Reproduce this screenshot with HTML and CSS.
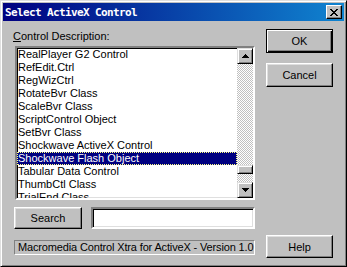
FILE: index.html
```html
<!DOCTYPE html>
<html lang="en">
<head>
  <meta charset="UTF-8" />
  <title>Select ActiveX Control</title>
  <link rel="stylesheet" href="styles.css">
</head>
<body>

  <div class="dialog">
    <div class="titlebar">
      <span class="title">Select ActiveX Control</span>
      <span class="close-btn">
        <svg width="8" height="7" viewBox="0 0 8 7"><path d="M0 0h2v1h1v1h2V1h1V0h2v1H7v1H6v1H5v1h1v1h1v1h1v1H6V6H5V5H3v1H2v1H0V6h1V5h1V4h1V3H2V2H1V1H0z" fill="#000"/></svg>
      </span>
    </div>

    <div class="body">
      <div class="left-col">
        <div class="label"><u>C</u>ontrol Description:</div>

        <div class="listbox">
          <ul class="items">
            <li>RealPlayer G2 Control</li>
            <li>RefEdit.Ctrl</li>
            <li>RegWizCtrl</li>
            <li>RotateBvr Class</li>
            <li>ScaleBvr Class</li>
            <li>ScriptControl Object</li>
            <li>SetBvr Class</li>
            <li>Shockwave ActiveX Control</li>
            <li class="selected">Shockwave Flash Object</li>
            <li>Tabular Data Control</li>
            <li>ThumbCtl Class</li>
            <li class="partial">TrialEnd Class</li>
          </ul>
          <div class="scrollbar">
            <div class="arrow-btn">
              <svg width="7" height="4" viewBox="0 0 7 4"><path d="M3 0h1v1h1v1h1v1h1v1H0V3h1V2h1V1h1z" fill="#000"/></svg>
            </div>
            <div class="track">
              <div class="thumb"></div>
            </div>
            <div class="arrow-btn">
              <svg width="7" height="4" viewBox="0 0 7 4"><path d="M0 0h7v1H6v1H5v1H4v1H3V3H2V2H1V1H0z" fill="#000"/></svg>
            </div>
          </div>
        </div>

        <div class="search-row">
          <button class="btn search-btn" type="button">Search</button>
          <input class="search-input" type="text" />
        </div>

        <div class="status">Macromedia Control Xtra for ActiveX - Version 1.0</div>
      </div>

      <div class="right-col">
        <button class="btn default-btn" type="button">OK</button>
        <button class="btn cancel-btn" type="button">Cancel</button>
        <button class="btn help-btn" type="button">Help</button>
      </div>
    </div>
  </div>

</body>
</html>
```

FILE: styles.css
```css
* {
  box-sizing: border-box;
}

body {
  margin: 0;
  font-family: 'Liberation Sans', Arial, sans-serif;
  font-size: 11px;
  color: #000;
  background: #c0c0c0;
}

.dialog {
  width: 347px;
  height: 267px;
  background: #c0c0c0;
  border: 1px solid;
  border-color: #dfdfdf #000 #000 #dfdfdf;
  box-shadow: inset 1px 1px #fff, inset -1px -1px #808080;
  padding: 2px;
  display: flex;
  flex-direction: column;
}

/* title bar */
.titlebar {
  height: 18px;
  background: linear-gradient(90deg, #000080, #1084d0);
  display: flex;
  align-items: center;
  justify-content: space-between;
  padding: 0 2px 0 2px;
}

.title {
  font-family: 'DejaVu Sans Mono', monospace;
  font-weight: bold;
  font-size: 11px;
  letter-spacing: -0.62px;
  color: #fff;
}

.close-btn {
  width: 16px;
  height: 14px;
  background: #c0c0c0;
  border: 1px solid;
  border-color: #fff #000 #000 #fff;
  box-shadow: inset -1px -1px #808080;
  display: flex;
  align-items: center;
  justify-content: center;
  padding-right: 1px;
}

/* content */
.body {
  flex: 1;
  display: flex;
  padding: 9px 12px 0 11px;
}

.left-col {
  width: 241px;
  display: flex;
  flex-direction: column;
}

.label {
  height: 13px;
  line-height: 13px;
  margin-left: -1px;
}

.listbox {
  margin-top: 3px;
  margin-left: 1px;
  width: 240px;
  height: 154px;
  border: 2px solid;
  border-color: #808080 #fff #fff #808080;
  box-shadow: inset 1px 1px #000, inset -1px -1px #dfdfdf;
  background: #fff;
  display: flex;
  overflow: hidden;
}

.items {
  list-style: none;
  margin: 0;
  padding: 0;
  flex: 1;
  overflow: hidden;
}

.items li {
  height: 13px;
  line-height: 13px;
  padding-left: 1px;
  white-space: nowrap;
}

/* last row is only half visible, as in the real list */
.items li.partial {
  height: 7px;
  overflow: hidden;
}

.items li.selected {
  background: #000080;
  color: #fff;
  outline: 1px dotted #ffff80;
  outline-offset: -1px;
}

.scrollbar {
  width: 16px;
  display: flex;
  flex-direction: column;
}

.arrow-btn {
  height: 16px;
  background: #c0c0c0;
  border: 1px solid;
  border-color: #dfdfdf #000 #000 #dfdfdf;
  box-shadow: inset 1px 1px #fff, inset -1px -1px #808080;
  display: flex;
  align-items: center;
  justify-content: center;
}

.track {
  flex: 1;
  background: repeating-conic-gradient(#c0c0c0 0 25%, #fff 0 50%) 0 0 / 2px 2px;
}

.thumb {
  margin-top: 101px;
  height: 9px;
  background: #c0c0c0;
  border: 1px solid;
  border-color: #dfdfdf #000 #000 #dfdfdf;
  box-shadow: inset 1px 1px #fff, inset -1px -1px #808080;
}

.search-row {
  margin-top: 7px;
  display: flex;
  gap: 9px;
}

.search-input {
  width: 164px;
  height: 22px;
  border: 2px solid;
  border-color: #808080 #fff #fff #808080;
  box-shadow: inset 1px 1px #000, inset -1px -1px #dfdfdf;
  background: #fff;
  outline: none;
  margin: 0;
}

.status {
  margin-top: 11px;
  height: 15px;
  line-height: 13px;
  border: 1px solid;
  border-color: #808080 #fff #fff #808080;
  padding-left: 3px;
  white-space: nowrap;
  font-size: 11px;
  letter-spacing: -0.15px;
}

/* buttons */
.btn {
  font-family: 'Liberation Sans', Arial, sans-serif;
  font-size: 11px;
  color: #000;
  background: #c0c0c0;
  border: 1px solid;
  border-color: #fff #000 #000 #fff;
  box-shadow: inset -1px -1px #808080, inset 1px 1px #dfdfdf;
  padding: 0;
  margin: 0;
}

.search-btn {
  width: 68px;
  height: 22px;
}

.right-col {
  margin-left: 11px;
  width: 67px;
  display: flex;
  flex-direction: column;
}

.right-col .btn {
  width: 67px;
}

.default-btn {
  margin-top: -1px;
  height: 24px;
  border: 1px solid #000;
  box-shadow: inset 1px 1px #fff, inset -1px -1px #000, inset -2px -2px #808080;
}

.cancel-btn {
  margin-top: 10px;
  height: 24px;
}

.help-btn {
  margin-top: 148px;
  height: 23px;
}
```
